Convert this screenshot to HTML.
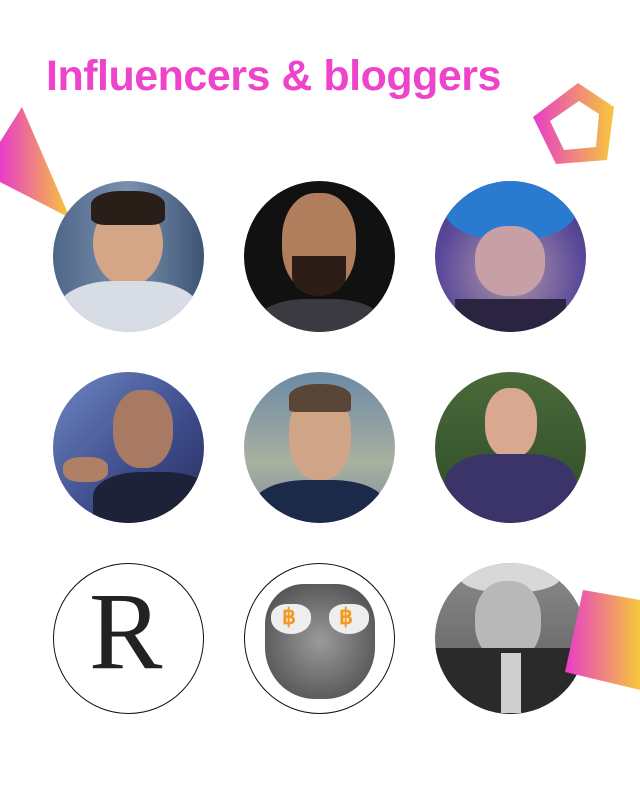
<!DOCTYPE html>
<html><head><meta charset="utf-8"><style>
html,body{margin:0;padding:0;background:#fff;}
body{width:640px;height:803px;position:relative;overflow:hidden;font-family:"Liberation Sans",sans-serif;}
h1{position:absolute;left:46px;top:52px;margin:0;font-size:43px;font-weight:bold;color:#ee44cc;letter-spacing:-0.5px;white-space:nowrap;}
.c{position:absolute;width:151px;height:151px;border-radius:50%;overflow:hidden;}
svg.s{position:absolute;left:0;top:0}
</style></head><body>
<svg class="s" width="640" height="803">
<defs>
<linearGradient id="g1" x1="0" y1="0" x2="1" y2="0"><stop offset="0" stop-color="#e83cc8"/><stop offset="1" stop-color="#f6c83c"/></linearGradient>
</defs>
<polygon points="22,107 70,218 0,182 0,142" fill="url(#g1)"/>
<path fill-rule="evenodd" fill="url(#g1)" d="M578,83 L614,107 L607,160 L556,164 L533,117 Z M579,101 L550,121 L564,150 L596,147 L599,114 Z"/>
</svg>
<h1>Influencers &amp; bloggers</h1>

<div class="c" style="left:53px;top:181px;background:linear-gradient(90deg,#4e6688,#7a90ae 50%,#3d5475)">
<div style="position:absolute;left:40px;top:20px;width:70px;height:85px;border-radius:50%;background:#d4a685"></div>
<div style="position:absolute;left:38px;top:10px;width:74px;height:34px;border-radius:40% 40% 20% 20%;background:#2a1e18"></div>
<div style="position:absolute;left:5px;top:100px;width:141px;height:70px;border-radius:40% 40% 0 0;background:#d8dce4"></div>
</div>
<div class="c" style="left:244px;top:181px;background:#111">
<div style="position:absolute;left:38px;top:12px;width:74px;height:100px;border-radius:45%;background:#b07e5c"></div>
<div style="position:absolute;left:48px;top:75px;width:54px;height:40px;border-radius:0 0 50% 50%;background:#2c1e16"></div>
<div style="position:absolute;left:15px;top:118px;width:121px;height:50px;border-radius:40% 40% 0 0;background:#3a3a40"></div>
</div>
<div class="c" style="left:435px;top:181px;background:radial-gradient(circle at 50% 60%,#b29aa8,#5b4a9a 60%,#3b3070)">
<div style="position:absolute;left:10px;top:0;width:131px;height:60px;border-radius:0 0 50% 50%;background:#2a7ad0"></div>
<div style="position:absolute;left:40px;top:45px;width:70px;height:70px;border-radius:45%;background:#c6a0a6"></div>
<div style="position:absolute;left:20px;top:118px;width:111px;height:40px;background:#2a2440"></div>
</div>

<div class="c" style="left:53px;top:372px;background:linear-gradient(135deg,#6e86c2,#3c4a8a 60%,#2a2e5a)">
<div style="position:absolute;left:60px;top:18px;width:60px;height:78px;border-radius:45%;background:#a87a64"></div>
<div style="position:absolute;left:40px;top:100px;width:120px;height:60px;border-radius:40% 40% 0 0;background:#1e2238"></div>
<div style="position:absolute;left:10px;top:85px;width:45px;height:25px;border-radius:40%;background:#b08066"></div>
</div>
<div class="c" style="left:244px;top:372px;background:linear-gradient(180deg,#6c8aa6,#a9b0a0 60%,#7c8e9e)">
<div style="position:absolute;left:45px;top:18px;width:62px;height:90px;border-radius:45%;background:#d0a486"></div>
<div style="position:absolute;left:45px;top:12px;width:62px;height:28px;border-radius:45% 45% 10% 10%;background:#5a4636"></div>
<div style="position:absolute;left:10px;top:108px;width:131px;height:60px;border-radius:40% 40% 0 0;background:#1c2a4a"></div>
</div>
<div class="c" style="left:435px;top:372px;background:linear-gradient(180deg,#4a6a3a,#2e4a26)">
<div style="position:absolute;left:50px;top:16px;width:52px;height:70px;border-radius:45%;background:#d8a890"></div>
<div style="position:absolute;left:10px;top:82px;width:131px;height:80px;border-radius:35% 35% 0 0;background:#3a3468"></div>
</div>

<div class="c" style="left:53px;top:563px;box-sizing:border-box;border:1.5px solid #111;background:#fff">
<div style="position:absolute;left:35px;top:12px;font-family:'Liberation Serif',serif;font-size:110px;color:#222;line-height:1">R</div>
</div>
<div class="c" style="left:244px;top:563px;box-sizing:border-box;border:1.5px solid #111;background:#fff">
<div style="position:absolute;left:20px;top:20px;width:110px;height:115px;border-radius:35% 35% 45% 45%;background:radial-gradient(circle at 50% 50%,#9a9a9a,#555 80%)"></div>
<div style="position:absolute;left:26px;top:40px;width:40px;height:30px;border-radius:40% 40% 50% 50%;background:#eee"></div>
<div style="position:absolute;left:84px;top:40px;width:40px;height:30px;border-radius:40% 40% 50% 50%;background:#eee"></div>
<div style="position:absolute;left:37px;top:40px;font-size:22px;font-weight:bold;color:#f39a1e">฿</div>
<div style="position:absolute;left:94px;top:40px;font-size:22px;font-weight:bold;color:#f39a1e">฿</div>
</div>
<div class="c" style="left:435px;top:563px;background:linear-gradient(180deg,#8a8a8a,#5a5a5a)">
<div style="position:absolute;left:25px;top:0;width:100px;height:30px;border-radius:50%;background:#d8d8d8"></div>
<div style="position:absolute;left:40px;top:18px;width:66px;height:80px;border-radius:45%;background:#b8b8b8"></div>
<div style="position:absolute;left:0;top:85px;width:151px;height:70px;background:#2a2a2a"></div>
<div style="position:absolute;left:66px;top:90px;width:20px;height:60px;background:#cfcfcf"></div>
</div>

<svg class="s" width="640" height="803"><polygon points="583,590 640,600 640,690 565,672" fill="url(#g1)"/></svg>
</body></html>
